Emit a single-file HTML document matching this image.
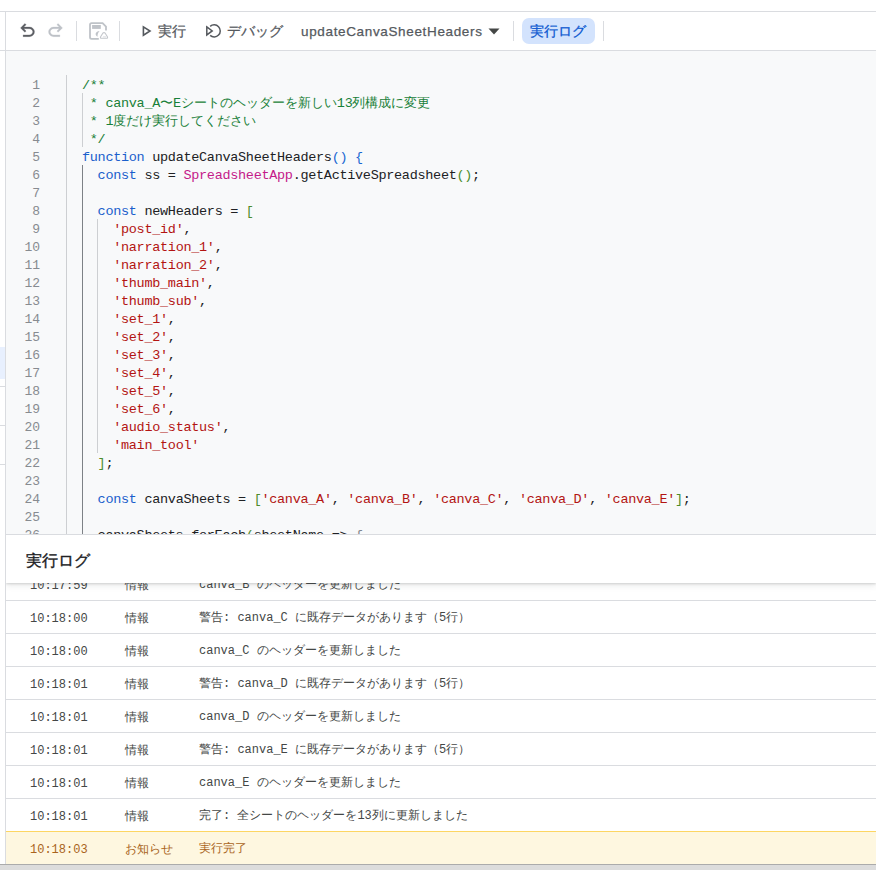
<!DOCTYPE html>
<html><head><meta charset="utf-8">
<style>
*{margin:0;padding:0;box-sizing:border-box}
html,body{width:876px;height:870px;overflow:hidden;background:#fff;font-family:"Liberation Sans",sans-serif}
body{position:relative}
.abs{position:absolute}
#topline{left:0;top:11px;width:876px;height:1px;background:#dadce0}
#vline{left:5px;top:11px;width:1px;height:853px;background:#dadce0}
#tbline{left:0;top:50px;width:876px;height:1px;background:#dadce0}
.sep{position:absolute;top:21px;width:1px;height:20px;background:#dadce0}
.tbtext{position:absolute;top:21px;font-size:14px;line-height:20px;color:#55595e;-webkit-text-stroke:0.25px currentColor;white-space:nowrap}
#chip{left:522px;top:18px;width:73px;height:26px;border-radius:7px;background:#d3e3fd}
#code{left:6px;top:51px;width:870px;height:483px;background:#f8f9fa;overflow:hidden}
.ln{position:absolute;left:0;width:34px;text-align:right;font-family:"Liberation Mono",monospace;font-size:13px;line-height:18px;color:#878b90}
.cl{position:absolute;left:76px;font-family:"Liberation Mono",monospace;font-size:13.5px;letter-spacing:-0.3px;line-height:18px;color:#202124;white-space:pre}
.k{color:#1b5fcc}.fk{color:#1b5fcc}.s{color:#b31412}.c{color:#188038}.cls{color:#c41a8a}.b1{color:#1967d2}.b2{color:#4c8c2c}.gr{color:#80868b}
.guide{position:absolute;width:1px}
.j{font-size:13px;letter-spacing:0}
#logpanel{left:6px;top:534px;width:870px;height:330px;background:#fff;overflow:hidden}
.row{position:absolute;left:0;width:870px;height:33px;border-top:1px solid #dadce0}
.t{position:absolute;left:24px;top:2px;font-family:"Liberation Mono",monospace;font-size:12px;line-height:32px;color:#444746;white-space:pre}
.lv{position:absolute;left:119px;top:1px;font-size:12px;line-height:32px;color:#444746;white-space:pre}
.msg{position:absolute;left:193px;top:1px;font-family:"Liberation Mono",monospace;font-size:12px;line-height:32px;color:#444746;white-space:pre}
.notice{background:#fef7e0;border-top:1px solid #fdd663}
.notice .t,.notice .lv,.notice .msg{color:#a9641c}
#loghead{position:absolute;left:0;top:0;width:870px;height:49px;background:#fff;box-shadow:0 1px 2px rgba(60,64,67,.18),0 3px 6px rgba(60,64,67,.1);z-index:2}
#loghead span{position:absolute;left:20px;top:16.5px;-webkit-text-stroke:0.35px #202124;font-size:16px;line-height:20px;color:#202124}
#logtop{left:6px;top:534px;width:870px;height:1px;background:#dadce0;z-index:3}
#bottombar{left:0;top:864px;width:876px;height:6px;background:#dcdcdc;border-top:1px solid #ababab}
svg{position:absolute;overflow:visible}
</style></head><body>
<div class="abs" id="topline"></div>
<div class="abs" id="tbline"></div>
<div class="abs" id="vline"></div>
<div class="abs" style="left:0;top:347px;width:5px;height:32px;background:#e8f0fe"></div>
<div class="abs" style="left:0;top:386px;width:5px;height:1px;background:#dadce0"></div>
<div class="abs" style="left:0;top:425px;width:5px;height:1px;background:#dadce0"></div>
<div class="abs" style="left:0;top:464px;width:5px;height:1px;background:#dadce0"></div>

<svg style="left:17px;top:20px" width="21" height="21" viewBox="0 -960 960 960"><path fill="#5b5e63" stroke="#5b5e63" stroke-width="12" d="M280-200v-80h284q63 0 109.5-40T720-420q0-60-46.5-100T564-560H312l104 104-56 56-200-200 200-200 56 56-104 104h252q97 0 166.5 63T800-420q0 94-69.5 157T564-200H280Z"/></svg>
<svg style="left:45px;top:20px" width="21" height="21" viewBox="0 -960 960 960"><g transform="translate(960,0) scale(-1,1)"><path fill="#bec2c7" stroke="#bec2c7" stroke-width="12" d="M280-200v-80h284q63 0 109.5-40T720-420q0-60-46.5-100T564-560H312l104 104-56 56-200-200 200-200 56 56-104 104h252q97 0 166.5 63T800-420q0 94-69.5 157T564-200H280Z"/></g></svg>
<div class="sep" style="left:76px"></div>
<svg style="left:86px;top:20px" width="26" height="22" viewBox="86 20 26 22">
 <path d="M98.8 38.8 H91.6 Q90 38.8 90 37.2 V24.7 Q90 23.1 91.6 23.1 H102.6 L106 26.5 V30.4" fill="none" stroke="#bfc3c8" stroke-width="1.8" stroke-linejoin="miter"/>
 <rect x="92.1" y="25" width="8.7" height="3.9" fill="#bfc3c8"/>
 <path d="M99.6 31 C95.5 31.2 94.2 34.8 97.6 36.8 C97.3 34.6 98 32.6 99.6 31 Z" fill="#bfc3c8"/>
 <path d="M102.8 33.2 Q104 32 105.2 33.2 L107.4 36.8 Q108 38.3 106.5 38.3 H101.5 Q100 38.3 100.6 36.8 Z" fill="none" stroke="#c4c7cc" stroke-width="1.1" stroke-linejoin="round"/>
 <path d="M103 36.8 H106" stroke="#d5d8dc" stroke-width="0.8"/>
</svg>
<div class="sep" style="left:119px"></div>
<svg style="left:138px;top:20px" width="22" height="22" viewBox="138 20 22 22"><path d="M143.4 26.9 L150 31.05 L143.4 35.2 Z" fill="none" stroke="#55595e" stroke-width="1.6" stroke-linejoin="miter"/></svg>
<div class="tbtext" style="left:158px">実行</div>
<svg style="left:202px;top:20px" width="22" height="22" viewBox="202 20 22 22"><path d="M210.15 26.4 A6.05 6.05 0 1 1 210.15 35.4" fill="none" stroke="#55595e" stroke-width="1.5"/><path d="M206.8 26.9 L212.2 30.9 L206.8 34.9 Z" fill="none" stroke="#55595e" stroke-width="1.5" stroke-linejoin="miter"/></svg>
<div class="tbtext" style="left:227px">デバッグ</div>
<div class="tbtext" style="left:301px;font-size:13.5px;letter-spacing:0.65px;top:21.5px">updateCanvaSheetHeaders</div>
<svg style="left:488px;top:28px" width="12" height="7" viewBox="0 0 12 7"><path d="M0.5 0.5 H11.5 L6 6.5 Z" fill="#444746"/></svg>
<div class="sep" style="left:513px"></div>
<div class="abs" id="chip"></div>
<div class="tbtext" style="left:530px;color:#0b57d0">実行ログ</div>
<div class="sep" style="left:603px"></div>

<div class="abs" id="code">
<div class="guide" style="left:60px;top:24px;height:460px;background:#cdcfd2"></div>
<div class="guide" style="left:76px;top:42px;height:54px;background:#cdcfd2"></div>
<div class="guide" style="left:76px;top:114px;height:370px;background:#7d8186"></div>
<div class="guide" style="left:91px;top:168px;height:234px;background:#cdcfd2"></div>
<div class="ln" style="top:26px">1</div>
<div class="cl" style="top:26px"><span class="c">/**</span></div>
<div class="ln" style="top:44px">2</div>
<div class="cl" style="top:44px"><span class="c"> * canva_A<span class="j">〜</span>E<span class="j">シートのヘッダーを新しい</span>13<span class="j">列構成に変更</span></span></div>
<div class="ln" style="top:62px">3</div>
<div class="cl" style="top:62px"><span class="c"> * 1<span class="j">度だけ実行してください</span></span></div>
<div class="ln" style="top:80px">4</div>
<div class="cl" style="top:80px"><span class="c"> */</span></div>
<div class="ln" style="top:98px">5</div>
<div class="cl" style="top:98px"><span class="fk">function</span> updateCanvaSheetHeaders<span class="b1">()</span> <span class="b1">{</span></div>
<div class="ln" style="top:116px">6</div>
<div class="cl" style="top:116px">  <span class="k">const</span> ss = <span class="cls">SpreadsheetApp</span>.getActiveSpreadsheet<span class="b2">()</span>;</div>
<div class="ln" style="top:134px">7</div>
<div class="cl" style="top:134px"></div>
<div class="ln" style="top:152px">8</div>
<div class="cl" style="top:152px">  <span class="k">const</span> newHeaders = <span class="b2">[</span></div>
<div class="ln" style="top:170px">9</div>
<div class="cl" style="top:170px">    <span class="s">&#x27;post_id&#x27;</span>,</div>
<div class="ln" style="top:188px">10</div>
<div class="cl" style="top:188px">    <span class="s">&#x27;narration_1&#x27;</span>,</div>
<div class="ln" style="top:206px">11</div>
<div class="cl" style="top:206px">    <span class="s">&#x27;narration_2&#x27;</span>,</div>
<div class="ln" style="top:224px">12</div>
<div class="cl" style="top:224px">    <span class="s">&#x27;thumb_main&#x27;</span>,</div>
<div class="ln" style="top:242px">13</div>
<div class="cl" style="top:242px">    <span class="s">&#x27;thumb_sub&#x27;</span>,</div>
<div class="ln" style="top:260px">14</div>
<div class="cl" style="top:260px">    <span class="s">&#x27;set_1&#x27;</span>,</div>
<div class="ln" style="top:278px">15</div>
<div class="cl" style="top:278px">    <span class="s">&#x27;set_2&#x27;</span>,</div>
<div class="ln" style="top:296px">16</div>
<div class="cl" style="top:296px">    <span class="s">&#x27;set_3&#x27;</span>,</div>
<div class="ln" style="top:314px">17</div>
<div class="cl" style="top:314px">    <span class="s">&#x27;set_4&#x27;</span>,</div>
<div class="ln" style="top:332px">18</div>
<div class="cl" style="top:332px">    <span class="s">&#x27;set_5&#x27;</span>,</div>
<div class="ln" style="top:350px">19</div>
<div class="cl" style="top:350px">    <span class="s">&#x27;set_6&#x27;</span>,</div>
<div class="ln" style="top:368px">20</div>
<div class="cl" style="top:368px">    <span class="s">&#x27;audio_status&#x27;</span>,</div>
<div class="ln" style="top:386px">21</div>
<div class="cl" style="top:386px">    <span class="s">&#x27;main_tool&#x27;</span></div>
<div class="ln" style="top:404px">22</div>
<div class="cl" style="top:404px">  <span class="b2">]</span>;</div>
<div class="ln" style="top:422px">23</div>
<div class="cl" style="top:422px"></div>
<div class="ln" style="top:440px">24</div>
<div class="cl" style="top:440px">  <span class="k">const</span> canvaSheets = <span class="b2">[</span><span class="s">&#x27;canva_A&#x27;</span>, <span class="s">&#x27;canva_B&#x27;</span>, <span class="s">&#x27;canva_C&#x27;</span>, <span class="s">&#x27;canva_D&#x27;</span>, <span class="s">&#x27;canva_E&#x27;</span><span class="b2">]</span>;</div>
<div class="ln" style="top:458px">25</div>
<div class="cl" style="top:458px"></div>
<div class="ln" style="top:476px">26</div>
<div class="cl" style="top:476px">  canvaSheets.forEach<span class="b2">(</span>sheetName =&gt; <span class="gr">{</span></div>
</div>

<div class="abs" id="logpanel">
<div id="loghead"><span>実行ログ</span></div>
<div class="row" style="top:33px"><div class="t">10:17:59</div><div class="lv">情報</div><div class="msg">canva_B のヘッダーを更新しました</div></div>
<div class="row" style="top:66px"><div class="t">10:18:00</div><div class="lv">情報</div><div class="msg">警告: canva_C に既存データがあります（5行）</div></div>
<div class="row" style="top:99px"><div class="t">10:18:00</div><div class="lv">情報</div><div class="msg">canva_C のヘッダーを更新しました</div></div>
<div class="row" style="top:132px"><div class="t">10:18:01</div><div class="lv">情報</div><div class="msg">警告: canva_D に既存データがあります（5行）</div></div>
<div class="row" style="top:165px"><div class="t">10:18:01</div><div class="lv">情報</div><div class="msg">canva_D のヘッダーを更新しました</div></div>
<div class="row" style="top:198px"><div class="t">10:18:01</div><div class="lv">情報</div><div class="msg">警告: canva_E に既存データがあります（5行）</div></div>
<div class="row" style="top:231px"><div class="t">10:18:01</div><div class="lv">情報</div><div class="msg">canva_E のヘッダーを更新しました</div></div>
<div class="row" style="top:264px"><div class="t">10:18:01</div><div class="lv">情報</div><div class="msg">完了: 全シートのヘッダーを13列に更新しました</div></div>
<div class="row notice" style="top:297px"><div class="t">10:18:03</div><div class="lv">お知らせ</div><div class="msg">実行完了</div></div>
</div>
<div class="abs" id="logtop"></div>
<div class="abs" id="bottombar"></div>
</body></html>
